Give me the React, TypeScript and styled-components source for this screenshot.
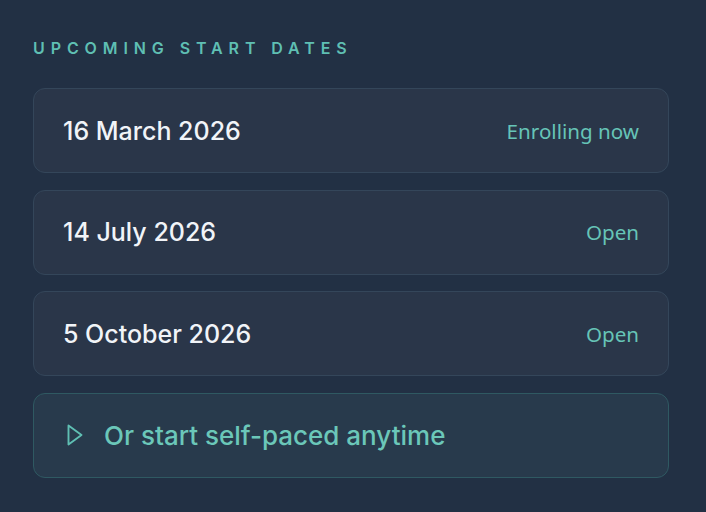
import styled, { createGlobalStyle } from "styled-components";

const GlobalStyle = createGlobalStyle`
  html, body {
    margin: 0;
    padding: 0;
    background: #223044;
  }
  body {
    font-family: Inter, "Noto Sans", "Liberation Sans", sans-serif;
    -webkit-font-smoothing: antialiased;
  }
`;

interface StartDate {
  date: string;
  status: string;
}

const dates: StartDate[] = [
  { date: "16 March 2026", status: "Enrolling now" },
  { date: "14 July 2026", status: "Open" },
  { date: "5 October 2026", status: "Open" },
];

const Panel = styled.section`
  width: 706px;
  height: 512px;
  box-sizing: border-box;
  padding: 36px 37px 0 33px;
  display: flex;
  flex-direction: column;
`;

const Heading = styled.h2`
  margin: 0 0 28px;
  font-size: 16px;
  line-height: 24px;
  font-weight: 600;
  letter-spacing: 5.9px;
  text-transform: uppercase;
  color: #5fbfb3;
`;

const List = styled.ul`
  list-style: none;
  margin: 0;
  padding: 0;
  display: flex;
  flex-direction: column;
  gap: 16.5px;
`;

const Card = styled.li<{ $accent?: boolean }>`
  box-sizing: border-box;
  height: 85px;
  padding: 0 29px;
  display: flex;
  align-items: center;
  justify-content: space-between;
  border-radius: 12px;
  background: ${(p) => (p.$accent ? "#283a4c" : "#2a3649")};
  border: 1.5px solid ${(p) => (p.$accent ? "#2f5962" : "#34465a")};
`;

const DateText = styled.span`
  font-size: 25px;
  font-weight: 500;
  color: #f1f4f8;
`;

const Status = styled.span`
  font-family: "Noto Sans", "Open Sans", sans-serif;
  font-size: 20.6px;
  font-weight: 400;
  color: #66c4b7;
`;

const SelfPaced = styled.span`
  display: flex;
  align-items: center;
  gap: 21px;
  padding-left: 4px;
  font-size: 26px;
  font-weight: 500;
  color: #6bc7b9;
`;

const PlayIcon = () => (
  <svg width="16" height="22" viewBox="0 0 16 22" aria-hidden="true">
    <path
      d="M1.5 1.5 L14.5 11 L1.5 20.5 Z"
      fill="none"
      stroke="#5fbfb3"
      strokeWidth="1.9"
      strokeLinejoin="round"
    />
  </svg>
);

export default function App() {
  return (
    <>
      <GlobalStyle />
      <Panel>
        <Heading>Upcoming start dates</Heading>
        <List>
          {dates.map((d) => (
            <Card key={d.date}>
              <DateText>{d.date}</DateText>
              <Status>{d.status}</Status>
            </Card>
          ))}
          <Card $accent>
            <SelfPaced>
              <PlayIcon />
              Or start self-paced anytime
            </SelfPaced>
          </Card>
        </List>
      </Panel>
    </>
  );
}
